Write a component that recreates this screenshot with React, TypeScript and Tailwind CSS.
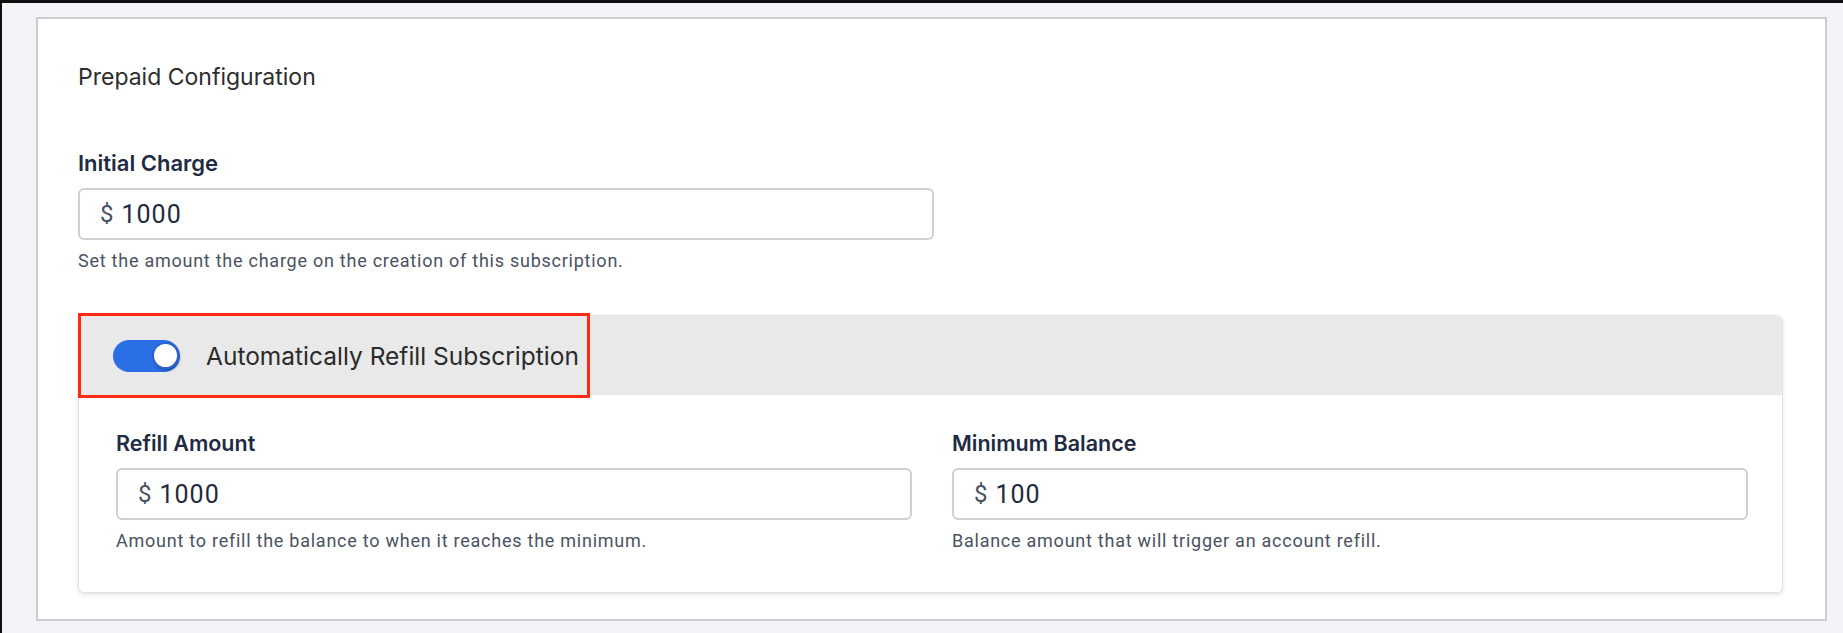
import React from "react";

function MoneyInput({ value, widthClass }: { value: string; widthClass: string }) {
  return (
    <div
      className={`${widthClass} h-[52px] rounded-[6px] border-2 border-[#cdd0d5] bg-white flex items-center pl-[20px]`}
      style={{ fontFamily: "Roboto, 'Liberation Sans', sans-serif" }}
    >
      <span className="text-[24px] leading-none text-[#4a5363]">$</span>
      <span className="text-[25px] leading-none text-[#1f2a3d] ml-[8px] tracking-[1px]">{value}</span>
    </div>
  );
}

function Field({
  label,
  value,
  help,
  widthClass,
  labelSize,
}: {
  label: string;
  value: string;
  help: string;
  widthClass: string;
  labelSize: string;
}) {
  return (
    <div className="flex flex-col">
      <div
        className={`${labelSize} leading-[24px] font-semibold text-[#1f2a44]`}
        style={{ fontFamily: "Inter, 'Noto Sans', sans-serif" }}
      >
        {label}
      </div>
      <div className="mt-[13px]">
        <MoneyInput value={value} widthClass={widthClass} />
      </div>
      <div
        className="mt-[11px] text-[18px] leading-[20px] tracking-[0.75px] text-[#4a5262]"
        style={{ fontFamily: "Roboto, 'Liberation Sans', sans-serif" }}
      >
        {help}
      </div>
    </div>
  );
}

export default function App() {
  return (
    <div className="w-[1843px] h-[633px] bg-[#f3f4f7] border-t-[3px] border-l-2 border-[#0e0e0e] overflow-hidden">
      <div className="mt-[14px] ml-[34px] mr-[16px] bg-white border-2 border-[#cbcdd1] pt-[44px] pl-[40px] pr-[42px] pb-[26px]">
        <div
          className="text-[23px] leading-[28px] text-[#2d2d2d]"
          style={{ fontFamily: "Inter, 'Noto Sans', sans-serif" }}
        >
          Prepaid Configuration
        </div>

        <div className="mt-[60px]">
          <Field
            label="Initial Charge"
            value="1000"
            help="Set the amount the charge on the creation of this subscription."
            widthClass="w-[856px]"
            labelSize="text-[22px]"
          />
        </div>

        <div className="relative mt-[44px] rounded-[6px] border border-[#e2e2e2] bg-white shadow-[0_2px_4px_rgba(0,0,0,0.10)]">
          <div className="h-[79px] rounded-t-[6px] bg-[#e9e9e9] flex items-center pl-[34px]">
            <div className="relative w-[67px] h-[32px] rounded-full bg-[#2b6fe6]">
              <div className="absolute right-[1px] top-[2px] w-[27px] h-[27px] rounded-full bg-white border-2 border-[#2d62cf] shadow-[1px_2px_2px_rgba(20,50,120,0.45)]" />
            </div>
            <div
              className="ml-[26px] text-[24.5px] leading-[28px] text-[#2b2b2b]"
              style={{ fontFamily: "Inter, 'Noto Sans', sans-serif" }}
            >
              Automatically Refill Subscription
            </div>
          </div>

          <div className="grid grid-cols-2 gap-[40px] pl-[37px] pr-[34px] pt-[36px] pb-[41px]">
            <Field
              label="Refill Amount"
              value="1000"
              help="Amount to refill the balance to when it reaches the minimum."
              widthClass="w-full"
              labelSize="text-[21.5px]"
            />
            <Field
              label="Minimum Balance"
              value="100"
              help="Balance amount that will trigger an account refill."
              widthClass="w-full"
              labelSize="text-[21.5px]"
            />
          </div>

          <div className="absolute left-[-1px] top-[-3px] w-[512px] h-[85px] border-[3px] border-[#ff2a12] pointer-events-none" />
        </div>
      </div>
    </div>
  );
}
